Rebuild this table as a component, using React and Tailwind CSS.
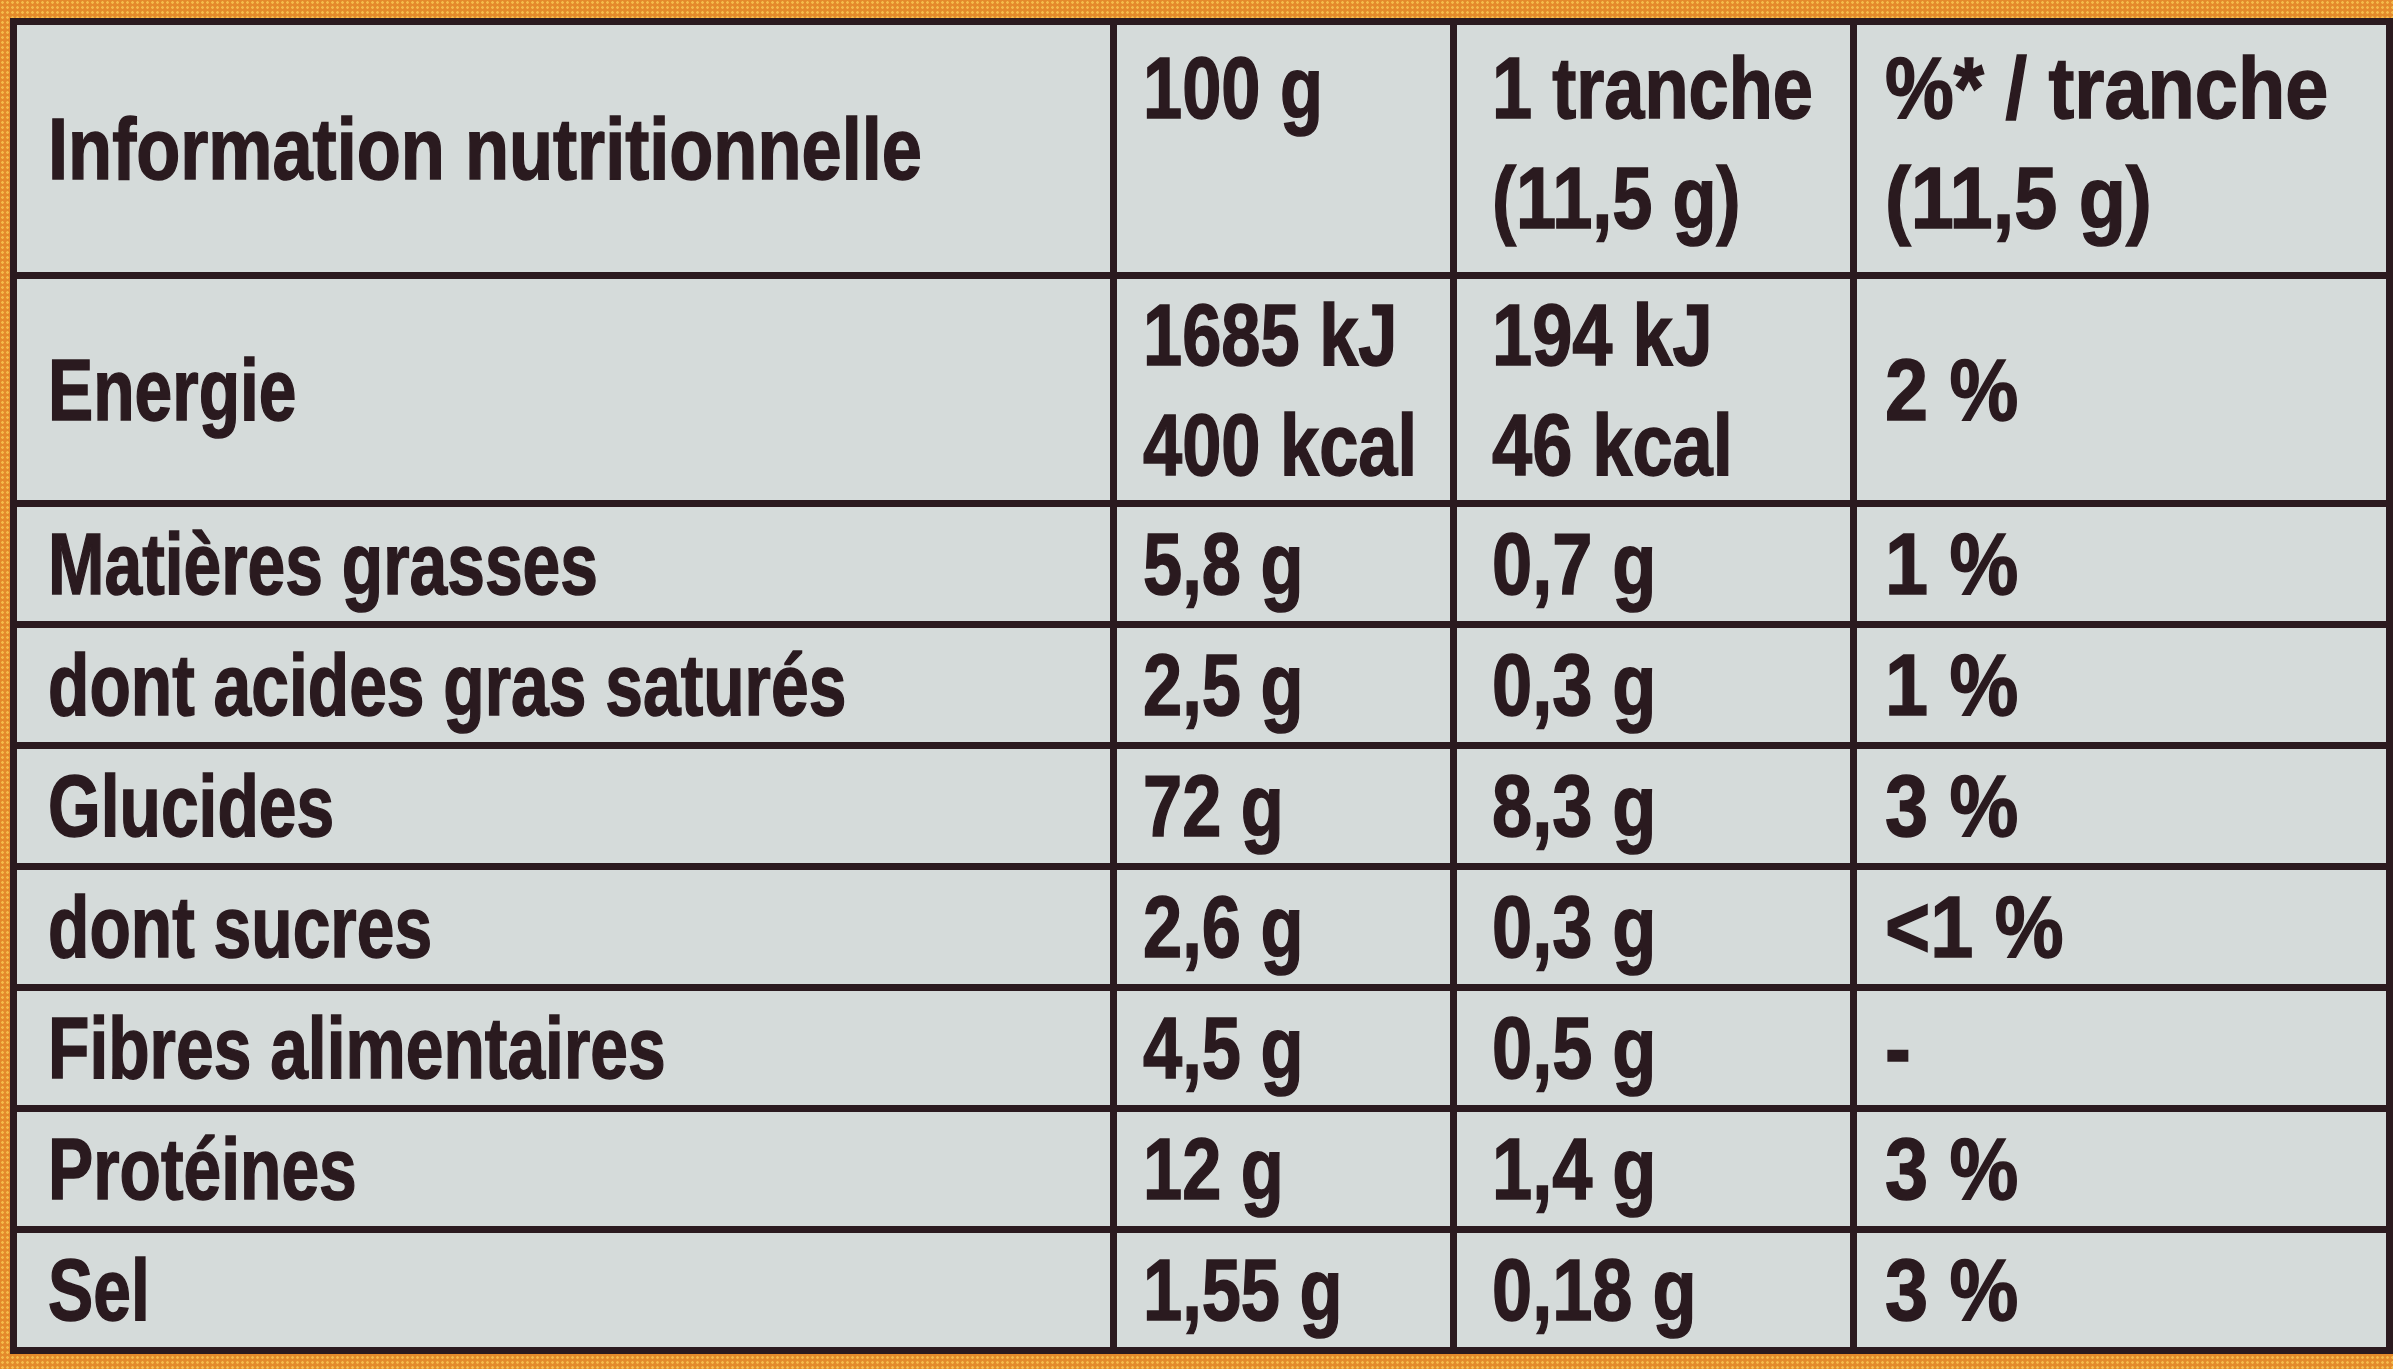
import React from 'react';

const rows = [
  ['Matières grasses', '5,8 g', '0,7 g', '1 %'],
  ['dont acides gras saturés', '2,5 g', '0,3 g', '1 %'],
  ['Glucides', '72 g', '8,3 g', '3 %'],
  ['dont sucres', '2,6 g', '0,3 g', '<1 %'],
  ['Fibres alimentaires', '4,5 g', '0,5 g', '-'],
  ['Protéines', '12 g', '1,4 g', '3 %'],
  ['Sel', '1,55 g', '0,18 g', '3 %'],
];

const cell = 'bg-[#d5dbda] text-[#2a1a1f] font-bold text-[88px] leading-[110px] whitespace-nowrap overflow-hidden [-webkit-text-stroke:1.5px_#2a1a1f]';
const pad = ['pl-[31px]', 'pl-[26px]', 'pl-[35px]', 'pl-[28px]'];
const squeeze = ['scale-x-[0.77]', 'scale-x-[0.8]', 'scale-x-[0.82]', 'scale-x-[0.88]'];

function T({ children, col }) {
  return <div className={`origin-left whitespace-nowrap ${squeeze[col]}`}>{children}</div>;
}

function App() {
  return (
    <div className="w-full h-[1369px] overflow-hidden bg-[#e48a2b] bg-[radial-gradient(circle,#f4bb4a_1px,transparent_1.6px)] bg-[length:5px_5px] pl-[10px] pt-[18px] pb-[15px]">
      <div
        className="grid grid-cols-[1093px_333px_393px_1fr] grid-rows-[247px_221px_repeat(7,114px)] gap-[7px] bg-[#2b1a1f] p-[7px]"
        style={{ fontFamily: '"Liberation Sans", Arial, sans-serif' }}
      >
        {/* header */}
        <div className={`${cell} ${pad[0]} flex items-center`}>
          <div className="origin-left scale-x-[0.82]">Information nutritionnelle</div>
        </div>
        <div className={`${cell} ${pad[1]} pt-[8px]`}>
          <T col={1}>100 g</T>
        </div>
        <div className={`${cell} ${pad[2]} pt-[8px]`}>
          <T col={2}>1 tranche</T>
          <T col={2}>(11,5 g)</T>
        </div>
        <div className={`${cell} ${pad[3]} pt-[8px]`}>
          <T col={3}>%* / tranche</T>
          <T col={3}>(11,5 g)</T>
        </div>

        {/* energie */}
        <div className={`${cell} ${pad[0]} flex items-center`}>
          <T col={0}>Energie</T>
        </div>
        <div className={`${cell} ${pad[1]} flex flex-col justify-center`}>
          <T col={1}>1685 kJ</T>
          <T col={1}>400 kcal</T>
        </div>
        <div className={`${cell} ${pad[2]} flex flex-col justify-center`}>
          <T col={2}>194 kJ</T>
          <T col={2}>46 kcal</T>
        </div>
        <div className={`${cell} ${pad[3]} flex items-center`}>
          <T col={3}>2 %</T>
        </div>

        {rows.map((r) =>
          r.map((v, i) => (
            <div key={r[0] + i} className={`${cell} ${pad[i]} leading-[114px]`}>
              <T col={i}>{v}</T>
            </div>
          ))
        )}
      </div>
    </div>
  );
}

export default App;
